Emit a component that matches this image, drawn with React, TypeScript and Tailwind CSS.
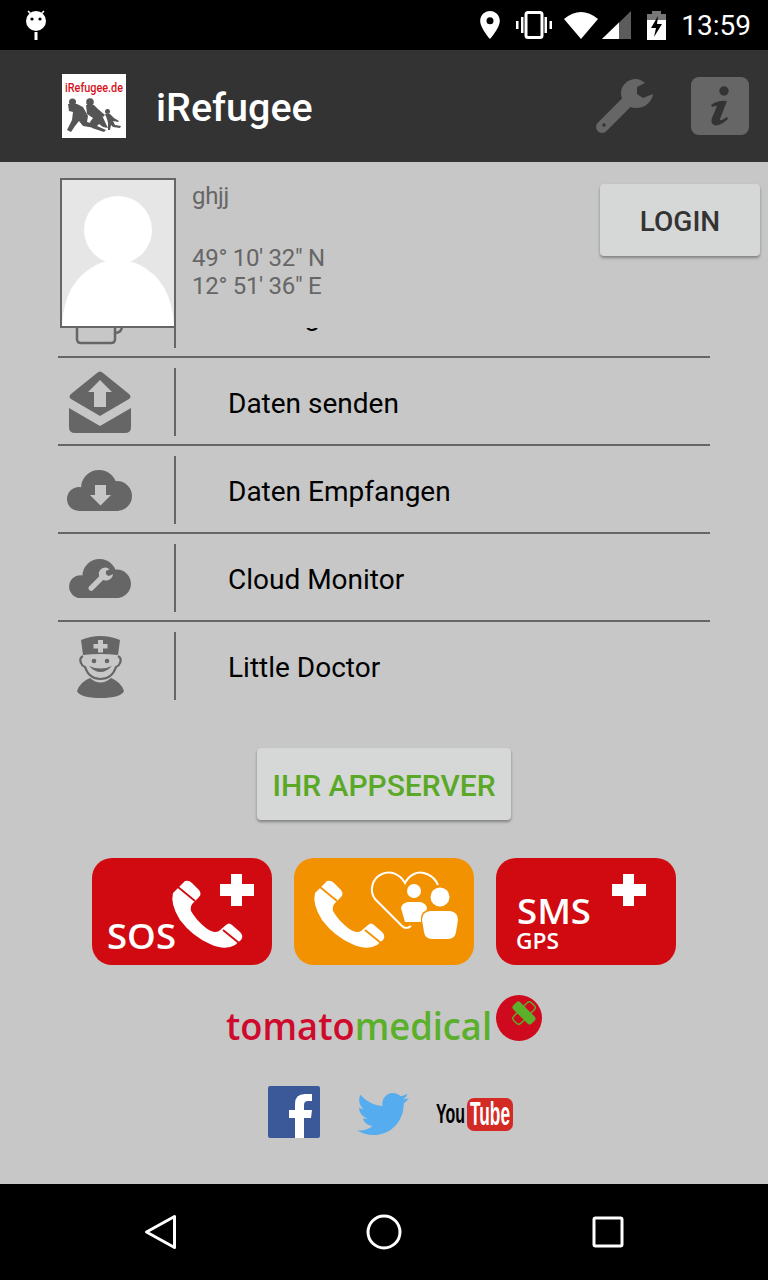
import { FaTwitter } from "react-icons/fa";

const GREY = "#666666";
const BG = "#c7c7c7";

function Android() {
  return (
    <svg width="22" height="32" viewBox="0 0 22 32" className="ml-[25px]" fill="white">
      <path d="M3 2l3 3M19 2l-3 3" stroke="white" strokeWidth="1.5" />
      <circle cx="11" cy="12" r="10" />
      <circle cx="7" cy="10" r="1.6" fill="black" />
      <circle cx="15" cy="10" r="1.6" fill="black" />
      <rect x="9.5" y="23" width="3" height="8" />
    </svg>
  );
}

function StatusIcons() {
  return (
    <div className="flex items-center pr-[17px]">
      <svg width="20" height="28" viewBox="5 2 14 20" fill="white">
        <path d="M12 2C8.13 2 5 5.13 5 9c0 5.25 7 13 7 13s7-7.75 7-13c0-3.87-3.13-7-7-7zm0 9.5a2.5 2.5 0 0 1 0-5 2.5 2.5 0 0 1 0 5z" />
      </svg>
      <svg width="36" height="28" viewBox="0 0 36 28" className="ml-[16px]" fill="white">
        <rect x="10" y="1.500" width="16" height="25" rx="2" fill="none" stroke="white" strokeWidth="3" />
        <rect x="0" y="10" width="2.500" height="8" />
        <rect x="5" y="6" width="2.500" height="16" />
        <rect x="28.500" y="6" width="2.500" height="16" />
        <rect x="33.500" y="10" width="2.500" height="8" />
      </svg>
      <svg width="34" height="28" viewBox="0 0 34 28" className="ml-[12px]" fill="white">
        <path d="M0 8Q17 -6 34 8L17 28Z" />
      </svg>
      <svg width="29" height="28" viewBox="0 0 29 28" className="ml-[4px]">
        <path d="M0 28L29 0V28Z" fill="#5c5c5c" />
        <path d="M0 28L17 11.500V28Z" fill="white" />
      </svg>
      <svg width="19" height="29" viewBox="0 0 19 29" className="ml-[16px]">
        <rect x="5" y="0" width="9" height="4" fill="#777" />
        <rect x="0" y="3" width="19" height="6" fill="#777" />
        <rect x="0" y="9" width="19" height="20" fill="white" />
        <path d="M11 5L4 17H9L7 26L15 13H10Z" fill="black" />
      </svg>
      <span className="ml-[15px] pt-[2px] text-[28px] leading-[48px] text-white">13:59</span>
    </div>
  );
}

function LogoMark() {
  return (
    <svg width="64" height="64" viewBox="0 0 64 64" className="bg-white">
      <text x="3" y="18" fontSize="13" fontWeight="500" fill="#d8121c" textLength="58" lengthAdjust="spacingAndGlyphs" fontFamily="Roboto, sans-serif">
        iRefugee.de
      </text>
      <g fill="#555555">
        <circle cx="10.500" cy="28" r="3.500" />
        <circle cx="28" cy="28" r="3.800" />
        <circle cx="45.500" cy="37.500" r="2.500" />
        <path d="M6 30L15 30L21 33L26 42L25 48L33 50L33 54L21 52L17 47L13 52L9 58L5 56L10 46L11 38L7 37Z" />
        <path d="M24 31L32 31L38 37L44 50L46 54L41 53L37 50L35 52L44 56L42 58L30 54L28 48L31 44L25 40Z" />
        <path d="M37 36L43 41L41 43L36 39Z" />
        <path d="M43 40L48 40L52 44L57 47L56 48L51 47L53 51L59 52L58 54L51 53L49 51L48 56L46 56L46 49L45 45Z" />
      </g>
    </svg>
  );
}

function Wrench({ color, hole, size }: { color: string; hole: string; size: number }) {
  return (
    <svg width={size} height={size} viewBox="0 0 58 58">
      <path d="M7 50L32 25" stroke={color} strokeWidth="12" strokeLinecap="round" />
      <path d="M50 6Q45 2 41 2C32 2 26 9 26 16C26 25 33 31 41 31C50 31 57 25 58 17L48 21L42 17L42 10Z" fill={color} />
      <circle cx="9" cy="48" r="1.700" fill={hole} />
    </svg>
  );
}

function InfoBox() {
  return (
    <svg width="58" height="58" viewBox="0 0 58 58">
      <rect width="58" height="58" rx="8" fill={GREY} />
      <circle cx="33" cy="14" r="4.700" fill="#333333" />
      <path d="M20 28Q27 23 36 24L29 42Q29 45 36 40L37 42Q28 50 23 48Q19 46 21 41L26 29Q23 29 21 30Z" fill="#333333" />
    </svg>
  );
}

function MugIcon() {
  return (
    <svg width="62" height="62" viewBox="0 0 62 62" fill="none" stroke={GREY} strokeWidth="2.500">
      <path d="M8 10V56Q8 60 12 60H42Q46 60 46 56V44" />
      <path d="M46 50Q52 50 53 44" />
    </svg>
  );
}

function SendIcon() {
  return (
    <svg width="62" height="62" viewBox="0 0 62 62" fill={GREY}>
      <path d="M28 2Q31 -1 34 2L60 23Q63 26 60 28L31 45L2 28Q-1 26 2 23Z" />
      <path d="M0 37L31 55L62 37V56Q62 62 56 62H6Q0 62 0 56Z" />
      <path d="M31 9L43 21H37V36H25V21H19Z" fill={BG} />
    </svg>
  );
}

function CloudShape() {
  return (
    <>
      <circle cx="12" cy="29" r="12" />
      <circle cx="32" cy="18" r="18" />
      <circle cx="50" cy="26" r="15" />
      <rect x="12" y="25" width="40" height="16" />
    </>
  );
}

function CloudDownIcon() {
  return (
    <svg width="66" height="41" viewBox="0 0 66 41" fill={GREY}>
      <CloudShape />
      <path d="M28 15H39V25H44L33.500 35.500L23 25H28Z" fill={BG} />
    </svg>
  );
}

function CloudWrenchIcon() {
  return (
    <svg width="63" height="39" viewBox="0 0 66 41" fill={GREY}>
      <CloudShape />
      <g transform="translate(19 8) scale(0.47)">
        <path d="M9 48L32 25" stroke={BG} strokeWidth="12" strokeLinecap="round" />
        <path d="M50 6Q45 2 41 2C32 2 26 9 26 16C26 25 33 31 41 31C50 31 57 25 58 17L48 21L42 17L42 10Z" fill={BG} />
      </g>
    </svg>
  );
}

function DoctorIcon() {
  return (
    <svg width="47" height="63" viewBox="0 0 47 63">
      <path d="M4 5Q23.500 -3 43 5L41 20Q23.500 18 6 20Z" fill={GREY} />
      <path d="M21 5H26V9H30.500V13.500H26V17.500H21V13.500H16.500V9H21Z" fill={BG} />
      <path d="M6 21Q2 23 4 28Q5 31 8 32Q12 44 23.500 44Q35 44 39 32Q42 31 43 28Q45 23 41 21" fill="none" stroke={GREY} strokeWidth="2.200" />
      <circle cx="17" cy="26" r="2.300" fill={GREY} />
      <circle cx="30" cy="26" r="2.300" fill={GREY} />
      <path d="M12 31Q23.500 43 35 31Q23.500 36 12 31Z" fill={GREY} />
      <path d="M0 56Q3 47 13 43Q23.500 52 34 43Q44 47 47 56Q44 63 23.500 63Q3 63 0 56Z" fill={GREY} />
    </svg>
  );
}

const rows = [
  { label: "Umfrage", icon: <MugIcon /> },
  { label: "Daten senden", icon: <SendIcon /> },
  { label: "Daten Empfangen", icon: <CloudDownIcon /> },
  { label: "Cloud Monitor", icon: <CloudWrenchIcon /> },
];

function Row({ label, icon, last }: { label: string; icon: React.ReactNode; last?: boolean }) {
  return (
    <div className={`flex h-[88px] pt-[10px] ${last ? "" : "border-b-2 border-[#666666]"}`}>
      <div className="flex h-[68px] w-[116px] items-center justify-center pr-[32px]">{icon}</div>
      <div className="h-[68px] w-[2px] bg-[#666666]" />
      <div className="flex h-[68px] items-center pl-[52px] pt-[4px] text-[28px] text-black">{label}</div>
    </div>
  );
}

function Handset({ x = 0 }: { x?: number }) {
  return (
    <g transform={`translate(${x} 0)`}>
      <path
        d="M93 23Q97 22 100 25L107 32Q110 36 107 39L101 45Q98 48 99 53Q104 62 114 70Q122 76 127 73L134 67Q137 64 140 67L148 74Q152 78 149 82L143 87Q133 93 118 86Q100 78 88 62Q78 46 81 35Z"
        fill="white"
      />
    </g>
  );
}

function Cross({ x }: { x: number }) {
  return <path d={`M${x + 11} 16H${x + 22}V26H${x + 34}V38H${x + 22}V48H${x + 11}V38H${x}V26H${x + 11}Z`} fill="white" />;
}

const openSans = "'Open Sans', sans-serif";

function SosButton() {
  return (
    <svg width="180" height="107" viewBox="0 0 180 107">
      <rect width="180" height="107" rx="20" fill="#d10a11" />
      <Handset />
      <path d="M86 29L103 43M131 72L147 85" stroke="#d10a11" strokeWidth="1.800" />
      <Cross x={128} />
      <text x="15" y="91" fontSize="34" fontWeight="600" fill="white" fontFamily={openSans} textLength="69" lengthAdjust="spacingAndGlyphs">
        SOS
      </text>
    </svg>
  );
}

function FamilyButton() {
  return (
    <svg width="180" height="107" viewBox="0 0 180 107">
      <rect width="180" height="107" rx="20" fill="#f39200" />
      <Handset x={-60} />
      <path d="M26 29L43 43M71 72L87 85" stroke="#f39200" strokeWidth="1.800" />
      <path d="M144 27C140 17 128 12 120 16C116 18 113 21 111 25C106 16 96 12 88 16C78 20 75 33 81 41L108 68Q112 72 117 68" fill="none" stroke="white" strokeWidth="2" />
      <circle cx="120" cy="33" r="7" fill="white" />
      <path d="M107 50Q108 45 114 44H126Q132 45 133 50L130 64H111Z" fill="white" />
      <circle cx="146" cy="39" r="11" fill="#f39200" />
      <circle cx="146" cy="39" r="9.500" fill="white" />
      <rect x="127" y="52" width="38" height="31" rx="8" fill="#f39200" />
      <path d="M128 62Q128 54 136 53H156Q164 54 164 62L162 74Q161 81 154 81H138Q131 81 130 74Z" fill="white" />
    </svg>
  );
}

function SmsButton() {
  return (
    <svg width="180" height="107" viewBox="0 0 180 107">
      <rect width="180" height="107" rx="20" fill="#d10a11" />
      <Cross x={116} />
      <text x="21" y="66" fontSize="34" fontWeight="600" fill="white" fontFamily={openSans} textLength="74" lengthAdjust="spacingAndGlyphs">
        SMS
      </text>
      <text x="20" y="91" fontSize="21" fontWeight="600" fill="white" fontFamily={openSans} textLength="43" lengthAdjust="spacingAndGlyphs">
        GPS
      </text>
    </svg>
  );
}

function TomatoLogo() {
  return (
    <svg width="318" height="47" viewBox="0 0 318 47">
      <text x="0" y="45" fontSize="37" fontWeight="600" fontFamily={openSans} textLength="266" lengthAdjust="spacingAndGlyphs">
        <tspan fill="#cf0a2c">tomato</tspan>
        <tspan fill="#5aaf2b">medical</tspan>
      </text>
      <circle cx="293" cy="23" r="23" fill="#cf0a1e" />
      <g transform="rotate(-45 298 18)">
        <rect x="285.500" y="13" width="25" height="10" rx="3" fill="none" stroke="#5aaf2b" strokeWidth="1.400" />
      </g>
      <g transform="rotate(45 298 18)">
        <rect x="285" y="13" width="26" height="10" rx="3" fill="#5aaf2b" />
      </g>
    </svg>
  );
}

function Facebook() {
  return (
    <svg width="52" height="52" viewBox="0 0 52 52">
      <rect width="52" height="52" rx="2" fill="#3b5998" />
      <path d="M36 52V32H43L44 24H36V19Q36 15 40 15H44V8H37Q27 8 27 18V24H21V32H27V52Z" fill="white" />
    </svg>
  );
}

function YouTube() {
  return (
    <svg width="78" height="34" viewBox="0 0 78 34" className="mt-[12px]">
      <rect x="31" y="0" width="46" height="33" rx="7" fill="#d42a26" />
      <text x="0" y="25" fontSize="28" fontWeight="700" fill="black" fontFamily="'Liberation Sans', sans-serif" textLength="29" lengthAdjust="spacingAndGlyphs">
        You
      </text>
      <text x="34" y="27" fontSize="33" fontWeight="700" fill="white" fontFamily="'Liberation Sans', sans-serif" textLength="40" lengthAdjust="spacingAndGlyphs">
        Tube
      </text>
    </svg>
  );
}

export default function App() {
  return (
    <div className="flex h-[1280px] w-full flex-col bg-[#c7c7c7] [font-family:Roboto,sans-serif]">
      {/* Status bar */}
      <div className="flex h-[50px] shrink-0 items-center justify-between bg-black">
        <Android />
        <StatusIcons />
      </div>

      {/* App bar */}
      <div className="flex h-[112px] shrink-0 items-center bg-[#333333] pl-[62px] pr-[19px]">
        <LogoMark />
        <span className="ml-[30px] pt-[4px] text-[39.500px] font-medium text-white">iRefugee</span>
        <div className="ml-auto flex items-center gap-[38px]">
          <Wrench color={GREY} hole="#333333" size={58} />
          <InfoBox />
        </div>
      </div>

      {/* Profile header */}
      <div className="flex h-[166px] shrink-0 pl-[60px] pr-[8px] pt-[16px]">
        <div className="h-[150px] w-[116px] shrink-0 border-2 border-[#666666] bg-[#e6e6e6]">
          <svg width="112" height="146" viewBox="0 0 112 146" fill="white">
            <circle cx="56" cy="50" r="34" />
            <path d="M0 146Q2 100 36 84Q56 76 76 84Q110 100 112 146Z" />
          </svg>
        </div>
        <div className="ml-[16px] flex flex-col pt-[4px] text-[24px] leading-[28px] tracking-[-0.3px] text-[#666666]">
          <span>ghjj</span>
          <span className="mt-[34px]">49° 10' 32" N</span>
          <span>12° 51' 36" E</span>
        </div>
        <button className="ml-auto mt-[6px] h-[72px] w-[160px] rounded-[4px] bg-[#d6d7d7] pt-[3px] text-[28px] font-medium text-[#333333] shadow-[0_2px_3px_rgba(0,0,0,0.35)]">
          LOGIN
        </button>
      </div>

      {/* Scrolled menu list */}
      <div className="ml-[58px] h-[380px] w-[652px] shrink-0 overflow-hidden">
        <div className="mt-[-58px]">
          {rows.map((r) => (
            <Row key={r.label} label={r.label} icon={r.icon} />
          ))}
          <Row label="Little Doctor" icon={<DoctorIcon />} last />
        </div>
      </div>

      <button className="mx-auto mt-[40px] h-[72px] w-[254px] shrink-0 rounded-[4px] bg-[#d6d7d7] pt-[2px] text-[30px] font-medium text-[#5aa926] shadow-[0_2px_3px_rgba(0,0,0,0.35)]">
        IHR APPSERVER
      </button>

      <div className="mt-[38px] flex shrink-0 justify-center gap-[22px]">
        <SosButton />
        <FamilyButton />
        <SmsButton />
      </div>

      <div className="mt-[30px] flex shrink-0 pl-[226px]">
        <TomatoLogo />
      </div>

      <div className="mt-[44px] flex shrink-0 pl-[268px]">
        <Facebook />
        <FaTwitter className="ml-[37px] mt-[2px] h-[52px] w-[52px] text-[#55acee]" />
        <div className="ml-[27px]">
          <YouTube />
        </div>
      </div>

      {/* Nav bar */}
      <div className="mt-auto flex h-[96px] shrink-0 items-center bg-black">
        <svg width="768" height="96" viewBox="0 0 768 96" fill="none" stroke="white" strokeWidth="3">
          <path d="M174.500 32.500V63.500L146.500 48Z" strokeLinejoin="round" />
          <circle cx="384" cy="48" r="16" />
          <rect x="594" y="34" width="28" height="28" rx="1.500" />
        </svg>
      </div>
    </div>
  );
}
